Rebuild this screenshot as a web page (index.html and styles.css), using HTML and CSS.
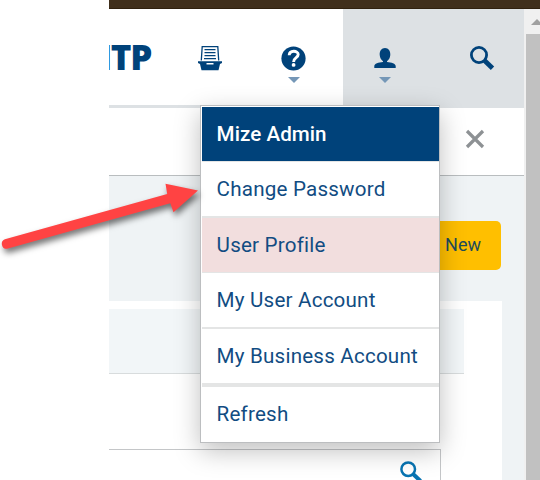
FILE: index.html
```html
<!DOCTYPE html>
<html lang="en">
<head>
    <meta charset="UTF-8">
    <meta name="viewport" content="width=device-width, initial-scale=1.0">
    <title>User Menu</title>
    <link rel="stylesheet" href="styles.css">
</head>
<body>
    <div class="app">
        <div class="topbar"></div>
        <div class="window">
            <div class="page">
                <header class="header">
                    <div class="logo"><span>I</span>TP</div>
                    <a class="nav-item inbox">
                        <svg width="24" height="26" viewBox="0 0 24 26">
                            <path d="M3.3 15.5 L4.2 1.6 H19.8 L20.7 15.5" fill="none" stroke="#00427a" stroke-width="1.3"/>
                            <path d="M6.5 4.6H17.5M6.5 7.6H17.5M6.5 10.6H17.5M6 13.6H18" stroke="#00427a" stroke-width="1.3"/>
                            <path fill-rule="evenodd" d="M0 16.3H24V18L22 19L20.5 25.3H3.5L2 19L0 18Z M8.5 18V19.6H15.5V18Z" fill="#00427a"/>
                        </svg>
                    </a>
                    <a class="nav-item help">
                        <svg width="25" height="25" viewBox="0 0 25 25">
                            <circle cx="12.5" cy="12.5" r="12.1" fill="#00427a"/>
                            <path d="M8.2 9.3C8.4 3.9 17.2 4.2 17.2 8.6C17.2 11.8 12.6 11.6 12.6 15.9" fill="none" stroke="#fff" stroke-width="2.9"/>
                            <circle cx="12.6" cy="18.9" r="1.9" fill="#fff"/>
                        </svg>
                        <i class="caret"></i>
                    </a>
                    <div class="tools">
                        <a class="nav-item user">
                            <svg width="22" height="21" viewBox="0 0 22 21">
                                <path d="M11 0C14.5 0 16.6 3 16.3 7C16.1 9.8 14.8 12 13 13.2V14C17.5 14.5 21.7 15.5 21.7 18V20H0.3V18C0.3 15.5 4.5 14.5 9 14V13.2C7.2 12 5.9 9.8 5.7 7C5.4 3 7.5 0 11 0Z" fill="#00427a"/>
                            </svg>
                            <i class="caret"></i>
                        </a>
                        <a class="nav-item search">
                            <svg width="25" height="25" viewBox="0 0 25 25">
                                <circle cx="9" cy="9" r="7.6" fill="none" stroke="#00427a" stroke-width="2.8"/>
                                <path d="M14 14L22.5 22.2" stroke="#00427a" stroke-width="4.8"/>
                            </svg>
                        </a>
                    </div>
                </header>
                <div class="subheader">
                    <svg width="20" height="20" viewBox="0 0 20 20">
                        <path d="M2 2L18 18M18 2L2 18" stroke="#8d9194" stroke-width="3.2"/>
                    </svg>
                </div>
                <main class="content">
                    <div class="actions"><button class="new-btn">New</button></div>
                    <div class="panel">
                        <div class="filter"></div>
                        <div class="search-box">
                            <svg width="22" height="22" viewBox="0 0 22 22">
                                <circle cx="8.2" cy="8.2" r="6.8" fill="none" stroke="#0874b2" stroke-width="2.5"/>
                                <path d="M12.8 12.8L20.5 20" stroke="#0874b2" stroke-width="4"/>
                            </svg>
                        </div>
                    </div>
                </main>
            </div>
            <div class="scrollbar">
                <i class="scroll-up"></i>
                <div class="thumb"></div>
            </div>
        </div>
    </div>

    <ul class="menu">
        <li class="menu-title">Mize Admin</li>
        <li>Change Password</li>
        <li class="active">User Profile</li>
        <li class="account">My User Account</li>
        <li class="business">My Business Account</li>
        <li class="refresh">Refresh</li>
    </ul>

    <!-- arrow pointing at Change Password -->
    <svg class="arrow" width="210" height="110" viewBox="0 160 210 110">
        <path d="M4.9 239.2L167.2 194L165.5 183.8L198 190.5L173.5 212.2L170.3 203.3L7.1 248.8A5 5 0 0 1 4.9 239.2Z" fill="#ff4343"/>
    </svg>
</body>
</html>
```

FILE: styles.css
```css
body {
    margin: 0;
    height: 480px;
    position: relative;
    overflow: hidden;
    background: #fff;
    font-family: Roboto, sans-serif;
    color: #00427a;
}

* {
    box-sizing: border-box;
}

svg {
    display: block;
}

.app {
    height: 480px;
    margin-left: 109px;
    display: flex;
    flex-direction: column;
}

.topbar {
    height: 9px;
    flex: none;
    background: #402f1c;
    border-bottom: 1px solid #30210f;
}

.window {
    display: flex;
    flex: 1;
    min-height: 0;
}

.page {
    width: 415px;
    overflow: hidden;
}

/* Header */
.header {
    display: flex;
    height: 99px;
    border-bottom: 3px solid #dde1e4;
}

.logo {
    display: flex;
    width: 76px;
    height: 96px;
    padding-top: 31px;
    overflow: hidden;
    font: 800 35px/34px "Open Sans", sans-serif;
    letter-spacing: -1px;
}

/* only the edge of the first letter is in view */
.logo span {
    flex: none;
    margin-left: -9px;
    letter-spacing: -1.5px;
}

.nav-item {
    display: flex;
    flex-direction: column;
    align-items: center;
    flex: none;
}

.inbox {
    width: 49px;
    padding-top: 36px;
}

.help {
    width: 109px;
    padding: 37px 0 0 10px;
}

.caret {
    border: 6px solid transparent;
    border-top-color: #7597b7;
    border-bottom: 0;
    margin-top: 6px;
}

.tools {
    display: flex;
    width: 181px;
    height: 99px;
    background: #dde1e4;
}

.user {
    width: 84px;
    padding-top: 39px;
}

.user .caret {
    margin-top: 8px;
}

.search {
    width: 97px;
    padding: 37px 0 0 14px;
}

.subheader {
    display: flex;
    justify-content: flex-end;
    height: 68px;
    padding: 21px 39px 0 0;
    border-bottom: 1px solid #b9bdbf;
}

/* Content */
.content {
    height: 304px;
    background: #eff3f5;
}

.actions {
    display: flex;
    justify-content: flex-end;
    height: 125px;
    padding: 45px 23px 0 0;
}

.new-btn {
    width: 96px;
    height: 49px;
    padding: 0 20px 2px 0;
    border: none;
    border-radius: 5px;
    background: #ffbf00;
    font: 18px Roboto, sans-serif;
    color: #1f4c5c;
    text-align: right;
}

.panel {
    width: 393px;
    height: 179px;
    padding-top: 8px;
    background: #fff;
}

.filter {
    width: 355px;
    height: 65px;
    background: #f2f6f8;
    border-bottom: 1px solid #d8dcdd;
}

.search-box {
    display: flex;
    justify-content: flex-end;
    width: 332px;
    height: 50px;
    margin-top: 75px;
    padding: 11px 18px 0 0;
    border: 1px solid #c4c6c8;
    border-left: none;
}

/* Scrollbar */
.scrollbar {
    display: flex;
    flex-direction: column;
    width: 16px;
    padding-left: 2px;
    background: #f0f0f0;
}

.scroll-up {
    height: 0;
    margin: 10px 0 9px 5px;
    border: 6px solid transparent;
    border-bottom-color: #a0a0a0;
    border-top: 0;
    width: 0;
}

.thumb {
    flex: 1;
    background: #c1c1c1;
}

/* User dropdown */
.menu {
    position: absolute;
    left: 200px;
    top: 105px;
    width: 240px;
    height: 338px;
    margin: 0;
    padding: 1px 0 0 1px;
    list-style: none;
    background: #fff;
    border: 1px solid #bcbec0;
    box-shadow: 0 8px 24px rgba(0, 0, 0, 0.25);
    font-size: 20.6px;
    letter-spacing: 0.2px;
    color: #114c82;
}

.menu li {
    height: 56px;
    padding-left: 14.6px;
    line-height: 54px;
    border-bottom: 2px solid #e4e5e5;
}

.menu .menu-title {
    height: 55px;
    border-bottom-width: 1px;
    background: #00427a;
    color: #fff;
    font-weight: 500;
    letter-spacing: 0.05px;
}

.menu .active {
    height: 55px;
    border-bottom-width: 1px;
    background: #f2dede;
}

.menu .business {
    height: 58px;
    border-bottom-width: 4px;
}

.menu .refresh {
    height: 54px;
    border-bottom: none;
}

.arrow {
    position: absolute;
    left: 0;
    top: 160px;
    filter: drop-shadow(2px 4px 3px rgba(0, 0, 0, 0.55));
}
```
